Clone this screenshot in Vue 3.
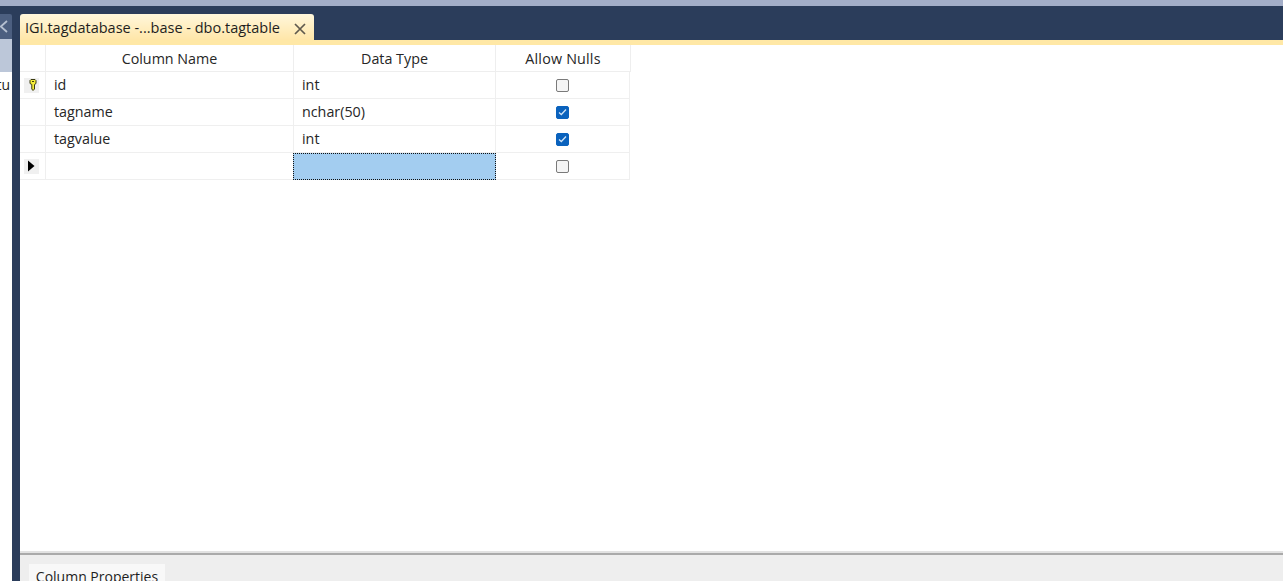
<script setup>
const rows = [
  { key: true, name: 'id', type: 'int', nulls: false },
  { name: 'tagname', type: 'nchar(50)', nulls: true },
  { name: 'tagvalue', type: 'int', nulls: true },
  { arrow: true, name: '', type: '', nulls: false, selected: true }
]
</script>

<template>
  <div class="app">
    <div class="topline"></div>
    <div class="main">
      <aside class="left">
        <div class="left-tab">
          <svg class="left-x" width="8" height="13" viewBox="0 0 8 13"><path d="M7 1 .8 6.500 7 12" fill="none" stroke="#b4bfd0" stroke-width="1.800"/></svg>
        </div>
        <div class="left-head"></div>
        <div class="left-body"><span class="clip">Statu</span></div>
      </aside>
      <section class="doc">
        <div class="tabbar">
          <div class="tab">
            <span class="tab-title">IGI.tagdatabase -...base - dbo.tagtable</span>
            <svg class="tab-x" width="12" height="12" viewBox="0 0 12 12"><path d="M1 1 11 11M11 1 1 11" fill="none" stroke="#5f5a4e" stroke-width="1.700"/></svg>
          </div>
        </div>
        <div class="accent"></div>
        <div class="designer">
          <div class="grid">
            <div class="hcell"></div>
            <div class="hcell">Column Name</div>
            <div class="hcell">Data Type</div>
            <div class="hcell nulls-head">Allow Nulls</div>
            <template v-for="(r, i) in rows" :key="i">
              <div class="cell ind">
                <span v-if="r.key || r.arrow" class="ind-box">
                  <svg v-if="r.key" class="key" width="8" height="12" viewBox="0 0 8 12"><path d="M1 1.500 2 .5h4l1 1v3l-1.500 1V10L4 11.500 2.800 10V5.500L1 4.500Z" fill="#f5ee3a" stroke="#3a3a10" stroke-width="1"/><path d="M3 2.500h2" stroke="#3a3a10" stroke-width="1"/></svg>
                  <svg v-else width="8" height="12" viewBox="0 0 8 12"><path d="M1 .5 7.500 6 1 11.500Z" fill="#000"/></svg>
                </span>
              </div>
              <div class="cell text"><span class="val">{{ r.name }}</span></div>
              <div class="cell text" :class="{ sel: r.selected }"><span class="val">{{ r.type }}</span></div>
              <div class="cell center">
                <span class="check" :class="{ on: r.nulls }">
                  <svg v-if="r.nulls" width="9" height="8" viewBox="0 0 9 8"><path d="M1 4.500 3.300 6.500 8 1.500" fill="none" stroke="#cfe3f7" stroke-width="1.300"/></svg>
                </span>
              </div>
            </template>
          </div>
        </div>
        <div class="splitter"></div>
        <div class="props">
          <div class="props-tab">Column Properties</div>
        </div>
      </section>
    </div>
  </div>
</template>

<style>
html, body { margin: 0; background: #fff; overflow: hidden; }
</style>

<style scoped>
.app {
  width: 1283px;
  height: 581px;
  display: flex;
  flex-direction: column;
  overflow: hidden;
  font-family: "Open Sans", "Noto Sans", sans-serif;
  color: #1e1e1e;
}
.topline { height: 6px; background: #a3aec8; flex: none; }
.main { flex: 1; display: flex; background: #2b3d5b; min-height: 0; }
.left { width: 12px; flex: none; padding-top: 8px; display: flex; flex-direction: column; }
.left-tab {
  height: 25px;
  background: #4c5f80;
  border-top-right-radius: 2px;
  display: flex;
  align-items: center;
  overflow: hidden;
}
.left-x { flex: none; }
.left-head { height: 33px; background: #bcc7d9; }
.left-body {
  flex: 1;
  background: #fff;
  overflow: hidden;
  display: flex;
  justify-content: flex-end;
  padding-top: 3px;
}
.clip { font-size: 14px; line-height: 20px; flex: none; margin-right: 2px; }
.doc { margin-left: 8px; flex: 1; display: flex; flex-direction: column; min-width: 0; }
.tabbar { height: 34px; flex: none; display: flex; align-items: flex-end; }
.tab {
  width: 294px;
  height: 26px;
  box-sizing: border-box;
  padding: 0 8px 0 5px;
  display: flex;
  align-items: center;
  justify-content: space-between;
  background: linear-gradient(#fff7dc, #ffe6a8);
  border-radius: 3px 3px 0 0;
  font-size: 14.5px;
  color: #1e1e1e;
}
.tab-title { white-space: nowrap; }
.tab-x { flex: none; margin-top: 3px; }
.accent { height: 5px; flex: none; background: #ffe8a6; }
.designer { flex: 1; background: #fff; min-height: 0; }
.grid {
  display: grid;
  grid-template-columns: 26px 248px 202px 135px;
  grid-auto-rows: 27px;
  width: 611px;
}
.hcell {
  font-size: 14.3px;
  text-align: center;
  line-height: 27px;
  border-right: 1px solid #eeeeee;
  border-bottom: 1px solid #eeeeee;
  box-sizing: border-box;
  color: #262626;
}
.nulls-head { letter-spacing: 0.2px; }
.cell {
  box-sizing: border-box;
  border-right: 1px solid #efefef;
  border-bottom: 1px solid #efefef;
  font-size: 14.3px;
  display: flex;
  align-items: center;
  color: #262626;
}
.val { margin-top: -2px; }
.text { padding-left: 8px; }
.center { justify-content: center; margin-right: 1px; }
.ind { justify-content: center; }
.ind-box {
  width: 15px;
  height: 15px;
  margin-left: -3px;
  background: #f0f0f0;
  display: flex;
  align-items: center;
  justify-content: center;
}
.key { margin-left: 4px; }
.sel {
  background: #a3cdf0;
  border: 1px dotted #111;
  margin-left: -1px;
}
.check {
  width: 13px;
  height: 13px;
  box-sizing: border-box;
  border: 1px solid #7a7a7a;
  border-radius: 2px;
  background: #f5f5f5;
  display: flex;
  align-items: center;
  justify-content: center;
}
.check.on { background: #0a62bd; border-color: #0a62bd; }
.splitter {
  height: 4px;
  flex: none;
  background: #e2e2e2;
  border-bottom: 2px solid #aaaaaa;
  box-sizing: border-box;
}
.props {
  height: 26px;
  flex: none;
  background: #eeeeee;
  padding: 9px 0 0 9px;
  box-sizing: border-box;
  overflow: hidden;
}
.props-tab {
  width: 136px;
  height: 30px;
  box-sizing: border-box;
  background: #f8f8f8;
  font-size: 14px;
  line-height: 26px;
  text-align: center;
  color: #1e1e1e;
  white-space: nowrap;
}
</style>
